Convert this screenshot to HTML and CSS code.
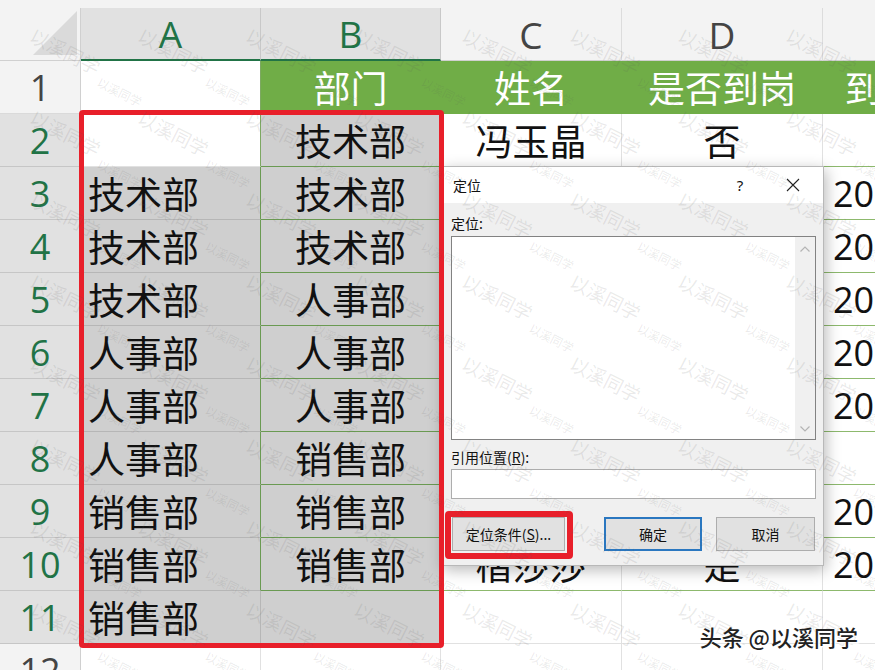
FILE: index.html
```html
<!DOCTYPE html>
<html lang="zh-CN">
<head>
    <meta charset="UTF-8">
    <meta name="viewport" content="width=device-width, initial-scale=1.0">
    <title>定位 - 以溪同学</title>
    <link rel="stylesheet" href="styles.css">
</head>
<body>
    <div class="sheet">
        <div class="strip"></div>

        <div class="row head">
            <div class="rh corner"><span class="tri"></span></div>
            <div class="ch col-a on">A</div>
            <div class="ch col-b on">B</div>
            <div class="ch col-c">C</div>
            <div class="ch col-d">D</div>
            <div class="ch col-e"></div>
        </div>

        <div class="row">
            <div class="rh">1</div>
            <div class="c col-a tl"></div>
            <div class="c col-b th">部门</div>
            <div class="c col-c th">姓名</div>
            <div class="c col-d th">是否到岗</div>
            <div class="c col-e th">到岗日期</div>
        </div>
        <div class="row">
            <div class="rh on">2</div>
            <div class="c col-a tl"></div>
            <div class="c col-b sel tb">技术部</div>
            <div class="c col-c tb">冯玉晶</div>
            <div class="c col-d tb">否</div>
            <div class="c col-e tb"></div>
        </div>
        <div class="row">
            <div class="rh on">3</div>
            <div class="c col-a sel tl">技术部</div>
            <div class="c col-b sel tb">技术部</div>
            <div class="c col-c tb">王志强</div>
            <div class="c col-d tb">是</div>
            <div class="c col-e tb">2021/3/1</div>
        </div>
        <div class="row">
            <div class="rh on">4</div>
            <div class="c col-a sel tl">技术部</div>
            <div class="c col-b sel tb">技术部</div>
            <div class="c col-c tb">李晓东</div>
            <div class="c col-d tb">是</div>
            <div class="c col-e tb">2021/3/2</div>
        </div>
        <div class="row">
            <div class="rh on">5</div>
            <div class="c col-a sel tl">技术部</div>
            <div class="c col-b sel tb">人事部</div>
            <div class="c col-c tb">张美玲</div>
            <div class="c col-d tb">是</div>
            <div class="c col-e tb">2021/3/1</div>
        </div>
        <div class="row">
            <div class="rh on">6</div>
            <div class="c col-a sel tl">人事部</div>
            <div class="c col-b sel tb">人事部</div>
            <div class="c col-c tb">赵雪梅</div>
            <div class="c col-d tb">是</div>
            <div class="c col-e tb">2021/3/5</div>
        </div>
        <div class="row">
            <div class="rh on">7</div>
            <div class="c col-a sel tl">人事部</div>
            <div class="c col-b sel tb">人事部</div>
            <div class="c col-c tb">孙建华</div>
            <div class="c col-d tb">是</div>
            <div class="c col-e tb">2021/3/3</div>
        </div>
        <div class="row">
            <div class="rh on">8</div>
            <div class="c col-a sel tl">人事部</div>
            <div class="c col-b sel tb">销售部</div>
            <div class="c col-c tb">周小红</div>
            <div class="c col-d tb">否</div>
            <div class="c col-e tb"></div>
        </div>
        <div class="row">
            <div class="rh on">9</div>
            <div class="c col-a sel tl">销售部</div>
            <div class="c col-b sel tb">销售部</div>
            <div class="c col-c tb">吴国庆</div>
            <div class="c col-d tb">是</div>
            <div class="c col-e tb">2021/3/8</div>
        </div>
        <div class="row">
            <div class="rh on">10</div>
            <div class="c col-a sel tl">销售部</div>
            <div class="c col-b sel tb">销售部</div>
            <div class="c col-c tb">楷莎莎</div>
            <div class="c col-d tb">是</div>
            <div class="c col-e tb">2021/3/9</div>
        </div>
        <div class="row">
            <div class="rh on">11</div>
            <div class="c col-a sel">销售部</div>
            <div class="c col-b sel"></div>
            <div class="c col-c"></div>
            <div class="c col-d"></div>
            <div class="c col-e"></div>
        </div>
        <div class="row">
            <div class="rh">12</div>
            <div class="c col-a"></div>
            <div class="c col-b"></div>
            <div class="c col-c"></div>
            <div class="c col-d"></div>
            <div class="c col-e"></div>
        </div>

        <div class="mark range-mark"></div>

        <div class="dialog">
            <div class="dlg-title">
                <span class="dlg-name">定位</span>
                <span class="dlg-help">?</span>
                <span class="dlg-close">
                    <svg width="14" height="14" viewBox="0 0 14 14"><path d="M1 1 L13 13 M13 1 L1 13" stroke="#222" stroke-width="1.1" fill="none"/></svg>
                </span>
            </div>
            <div class="dlg-body">
                <div class="dlg-label">定位:</div>
                <div class="listbox">
                    <div class="scrollbar">
                        <svg width="12" height="8" viewBox="0 0 12 8"><path d="M1.5 6.5 L6 2 L10.5 6.5" stroke="#b4b4b4" stroke-width="1.2" fill="none"/></svg>
                        <svg width="12" height="8" viewBox="0 0 12 8"><path d="M1.5 1.5 L6 6 L10.5 1.5" stroke="#b4b4b4" stroke-width="1.2" fill="none"/></svg>
                    </div>
                </div>
                <div class="dlg-label ref">引用位置(<u>R</u>):</div>
                <div class="ref-input"></div>
                <div class="dlg-buttons">
                    <button class="btn special">定位条件(<u>S</u>)...</button>
                    <button class="btn ok">确定</button>
                    <button class="btn cancel">取消</button>
                </div>
            </div>
        </div>

        <div class="mark button-mark"></div>

        <div class="wm big"></div>
        <div class="wm small"></div>

        <div class="credit">头条 @以溪同学</div>
    </div>

    <script>
    // fill the watermark layers
    document.querySelectorAll('.wm').forEach(function (layer) {
        for (let i = 0; i < 81; i++) {
            const s = document.createElement('span');
            s.textContent = '以溪同学';
            layer.appendChild(s);
        }
    });
    </script>
</body>
</html>
```

FILE: styles.css
```css
body {
    margin: 0;
    background-color: #ffffff;
    font-family: "Noto Sans CJK SC", "Noto Sans", sans-serif;
    width: 875px;
    height: 670px;
    overflow: hidden;
}

.sheet {
    position: relative;
    width: 875px;
    height: 670px;
    overflow: hidden;
}

.strip {
    height: 8px;
    background-color: #f3f3f3;
}

.row {
    display: flex;
    height: 53px;
}

.row > div {
    flex-shrink: 0;
    box-sizing: border-box;
    height: 53px;
    display: flex;
    align-items: center;
}

.col-a { width: 180px; }
.col-b { width: 180px; }
.col-c { width: 181px; }
.col-d { width: 201px; }
.col-e { width: 192px; }

/* column headers */
.ch {
    justify-content: center;
    background-color: #f3f3f3;
    color: #444;
    font-family: "Open Sans", "Noto Sans", sans-serif;
    font-size: 37px;
    border-right: 1px solid #dcdcdc;
    border-bottom: 1px solid #d0d0d0;
}

.ch.on {
    background-color: #e1e1e1;
    color: #217346;
    border-bottom: 2px solid #217346;
    border-right-color: #c8c8c8;
}

/* row headers */
.rh {
    width: 81px;
    justify-content: center;
    background-color: #f3f3f3;
    color: #444;
    font-family: "Open Sans", "Noto Sans", sans-serif;
    font-size: 36px;
    border-right: 1px solid #d0d0d0;
    border-bottom: 1px solid #dadada;
}

.rh.on {
    background-color: #e1e1e1;
    color: #217346;
    border-bottom-color: #c6c6c6;
}

.corner {
    align-items: flex-end;
    justify-content: flex-end;
    padding: 0 3px 3px 0;
    border-bottom: 1px solid #d0d0d0;
}

.tri {
    width: 0;
    height: 0;
    border-left: 44px solid transparent;
    border-bottom: 44px solid #dadada;
}

/* cells */
.c {
    justify-content: center;
    font-size: 37px;
    color: #111;
    background-color: #ffffff;
    border-right: 1px solid #e1e1e1;
    border-bottom: 1px solid #e1e1e1;
    white-space: nowrap;
    overflow: hidden;
}

.c.col-a {
    justify-content: flex-start;
    padding-left: 7px;
}

.c.col-e {
    justify-content: flex-start;
    padding-left: 10px;
    font-family: "Open Sans", "Noto Sans CJK SC", sans-serif;
    font-size: 36px;
}

.c.th {
    background-color: #70ad47;
    color: #ffffff;
    border-bottom-color: #70ad47;
    border-right-color: #70ad47;
}

.c.th.col-e {
    justify-content: center;
    padding-left: 0;
    font-family: "Noto Sans CJK SC", sans-serif;
    font-size: 37px;
}

.c.tb {
    border-bottom-color: #8db96d;
}

.c.tl {
    border-right-color: #7da862;
}

.c.sel {
    background-color: #cfcfcf;
    border-bottom-color: #b6b6b6;
    border-right-color: #b6b6b6;
}

.c.sel.tb {
    border-bottom-color: #6a9a52;
}

.c.sel.tl {
    border-right-color: #6a9a52;
}

/* red highlight boxes */
.mark {
    position: absolute;
    box-sizing: border-box;
    border: 5px solid #e81f2a;
    border-radius: 4px;
    z-index: 3;
}

.range-mark {
    left: 79px;
    top: 110px;
    width: 365px;
    height: 538px;
}

.button-mark {
    left: 445px;
    top: 511px;
    width: 128px;
    height: 48px;
    border-width: 6px;
    z-index: 4;
}

/* goto dialog */
.dialog {
    position: absolute;
    left: 441px;
    top: 166px;
    width: 383px;
    height: 400px;
    box-sizing: border-box;
    border: 1px solid #b8b8b8;
    background-color: #f0f0f0;
    box-shadow: 2px 4px 14px rgba(0, 0, 0, 0.28);
    z-index: 2;
    font-size: 14px;
    color: #111;
}

.dlg-title {
    height: 36px;
    background-color: #ffffff;
    display: flex;
    align-items: center;
    padding: 0 0 0 11px;
}

.dlg-name {
    flex: 1;
}

.dlg-help {
    width: 20px;
    text-align: center;
    font-family: "Noto Sans", sans-serif;
    font-size: 15px;
    margin-right: 36px;
}

.dlg-close {
    width: 14px;
    height: 14px;
    display: flex;
    margin-right: 23px;
}

.dlg-body {
    padding: 9px 7px 0 9px;
}

.dlg-label {
    height: 22px;
    line-height: 22px;
    margin-bottom: 2px;
}

.dlg-label.ref {
    margin-top: 6px;
    margin-bottom: 1px;
}

.listbox {
    height: 204px;
    box-sizing: border-box;
    background-color: #ffffff;
    border: 1px solid #828282;
    display: flex;
    justify-content: flex-end;
}

.scrollbar {
    width: 20px;
    background-color: #f0f0f0;
    display: flex;
    flex-direction: column;
    justify-content: space-between;
    align-items: center;
    padding: 8px 0 6px;
}

.ref-input {
    height: 30px;
    box-sizing: border-box;
    background-color: #ffffff;
    border: 1px solid #adadad;
}

.dlg-buttons {
    display: flex;
    margin-top: 18px;
}

.btn {
    height: 34px;
    box-sizing: border-box;
    background-color: #e1e1e1;
    border: 1px solid #adadad;
    font-family: "Noto Sans CJK SC", sans-serif;
    font-size: 14px;
    color: #111;
    padding: 0;
}

.btn.special {
    width: 113px;
    margin-left: 1px;
    margin-right: 39px;
}

.btn.ok {
    width: 98px;
    border: 2px solid #2a77c0;
    margin-right: 14px;
}

.btn.cancel {
    width: 99px;
}

/* watermark layers */
.wm {
    position: absolute;
    top: 9px;
    left: 12px;
    display: grid;
    grid-template-columns: repeat(9, 108px);
    grid-auto-rows: 82px;
    pointer-events: none;
    z-index: 6;
}

.wm span {
    display: flex;
    align-items: center;
    justify-content: center;
    transform: rotate(27deg);
    color: rgba(90, 90, 90, 0.13);
    font-size: 19px;
    white-space: nowrap;
}

.wm.small {
    top: 50px;
    left: 66px;
}

.wm.small span {
    font-size: 12px;
    color: rgba(90, 90, 90, 0.12);
}

.credit {
    position: absolute;
    right: 17px;
    bottom: 18px;
    font-size: 22px;
    font-weight: 500;
    color: #222;
    text-shadow: 1px 1px 0 #ffffff, 2px 2px 1px rgba(255, 255, 255, 0.8);
    z-index: 7;
}
```
